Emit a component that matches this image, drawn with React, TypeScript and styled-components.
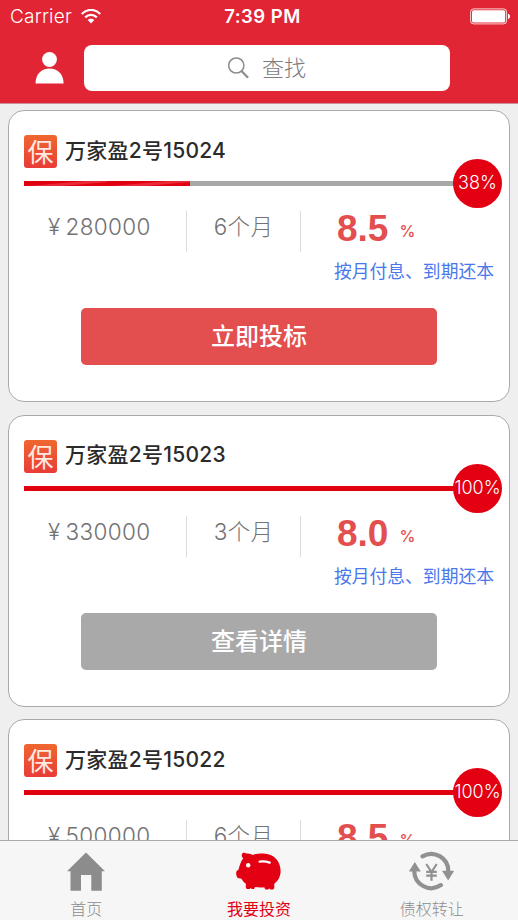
import React from 'react';
import styled, { createGlobalStyle } from 'styled-components';

const GlobalStyle = createGlobalStyle`
  * { box-sizing: border-box; }
  body { margin: 0; background: #efefef; font-family: Inter, "Noto Sans CJK SC", sans-serif; }
`;

const Screen = styled.div`
  width: 518px;
  height: 920px;
  display: flex;
  flex-direction: column;
  overflow: hidden;
  background: #efefef;
`;

const Header = styled.header`
  flex: none;
  height: 104px;
  background: #e22534;
  color: #fff;
  border-bottom: 1px solid #c9929a;
`;

const StatusBar = styled.div`
  height: 33px;
  display: grid;
  grid-template-columns: 1fr auto 1fr;
  align-items: center;
  padding: 0 7px 0 10px;
  font-size: 18px;
  line-height: 33px;
`;

const Carrier = styled.div`
  display: flex;
  align-items: center;
  gap: 9px;
  font-size: 19px;
  font-weight: 300;
  letter-spacing: 0.2px;
`;

const Clock = styled.div`
  font-weight: 600;
  font-size: 18.5px;
  letter-spacing: 0.5px;
  padding-left: 4px;
`;

const BatterySlot = styled.div`
  display: flex;
  justify-content: flex-end;
`;

const SearchRow = styled.div`
  display: flex;
  align-items: center;
  padding: 12px 0 0 35px;
  gap: 20px;
`;

const SearchBox = styled.div`
  width: 366px;
  height: 46px;
  border-radius: 8px;
  background: #fff;
  color: #7c7c81;
  display: flex;
  align-items: center;
  justify-content: center;
  gap: 13px;
  font-size: 22px;
  font-weight: 300;
  line-height: 46px;
  padding-bottom: 1px;
`;

const List = styled.main`
  flex: 1;
  min-height: 0;
  overflow: hidden;
  padding: 6px 8px 0;
  display: flex;
  flex-direction: column;
  gap: 12.5px;
`;

const Card = styled.section`
  flex: none;
  height: 292px;
  border: 1px solid #aaa;
  border-radius: 16px;
  background: #fff;
  padding: 24px 7px 0 15px;
`;

const TitleRow = styled.div`
  display: flex;
  align-items: center;
  gap: 8px;
  height: 33px;
`;

const Badge = styled.span`
  width: 33px;
  height: 33px;
  border-radius: 3px;
  background: linear-gradient(#f0672e, #e93b38);
  color: #ffe9e2;
  font-size: 26px;
  line-height: 33px;
  padding-top: 1px;
  text-align: center;
`;

const Title = styled.h2`
  margin: 0;
  font-size: 21px;
  font-weight: 500;
  line-height: 30px;
  color: #2b2b2b;
  letter-spacing: 0.25px;
  white-space: nowrap;
  padding-bottom: 2px;
`;

const ProgressRow = styled.div`
  display: flex;
  align-items: center;
  height: 49px;
  margin-top: -9px;
`;

const Track = styled.div`
  flex: 1;
  height: 5px;
  margin-right: -8px;
  background: #a8a8a8;
`;

const Fill = styled.div<{ $striped: boolean }>`
  height: 5px;
  background: ${({ $striped }) =>
    $striped
      ? 'linear-gradient(175deg, #e1000f 40%, #e92a39 48%, #e92a39 64%, #e1000f 72%) 0 0 / 83px 5px'
      : '#e1000f'};
`;

const Percent = styled.div`
  flex: none;
  width: 49px;
  height: 49px;
  border-radius: 50%;
  background: #e20012;
  color: #fff;
  font-size: 18px;
  font-weight: 300;
  line-height: 48px;
  display: flex;
  justify-content: center;
`;

const Facts = styled.div`
  display: grid;
  grid-template-columns: 163px 114px 1fr;
  height: 41px;
  margin-top: 3px;
`;

const Fact = styled.div`
  border-right: 1px solid #dcdcdc;
  color: #727272;
  font-size: 22.5px;
  font-weight: 300;
  line-height: 32px;
  text-align: center;
  white-space: nowrap;
  letter-spacing: 0.35px;
`;

const Amount = styled(Fact)`
  text-align: left;
  padding-left: 24px;
  display: flex;
  gap: 5px;
`;

const Rate = styled.div`
  padding-left: 36px;
  display: flex;
  align-items: baseline;
  color: #e34e4f;
  font-size: 37px;
  line-height: 35px;
  font-weight: 700;
  font-family: "Liberation Sans", sans-serif;
`;

const RateUnit = styled.span`
  font: 500 16px/20px Inter, sans-serif;
  margin-left: 11px;
  transform: translateY(-4px);
`;

const Terms = styled.div`
  color: #4a78ec;
  font-size: 17.8px;
  font-weight: 400;
  line-height: 26px;
  text-align: right;
  padding-right: 8px;
  margin-top: 7px;
`;

const Action = styled.button<{ $muted: boolean }>`
  display: block;
  width: 356px;
  height: 57px;
  margin: 23px 0 0 57px;
  padding: 0 0 4px;
  border: 0;
  border-radius: 5px;
  background: ${({ $muted }) => ($muted ? '#a9a9a9' : '#e34e4f')};
  color: #fff;
  font: 500 24px "Noto Sans CJK SC", sans-serif;
`;

const TabBar = styled.nav`
  flex: none;
  height: 80px;
  border-top: 1px solid #aaa;
  background: #f6f6f6;
  display: grid;
  grid-template-columns: repeat(3, 1fr);
`;

const Tab = styled.div<{ $active?: boolean }>`
  display: flex;
  flex-direction: column;
  align-items: center;
  color: ${({ $active }) => ($active ? '#e20012' : '#8c8c8c')};
  font-size: 16px;
  font-weight: ${({ $active }) => ($active ? 400 : 300)};
  line-height: 24px;
  padding-top: 8px;
  gap: 4px;
  svg { display: block; }
`;

const items = [
  { title: '万家盈2号15024', amount: '280000', term: '6个月', rate: '8.5', percent: 38, action: '立即投标' },
  { title: '万家盈2号15023', amount: '330000', term: '3个月', rate: '8.0', percent: 100, action: '查看详情' },
  { title: '万家盈2号15022', amount: '500000', term: '6个月', rate: '8.5', percent: 100, action: '查看详情' },
];

const WifiIcon = () => (
  <svg width="20" height="15" viewBox="0 0 20 15" fill="none" stroke="#fff" strokeWidth="2.3">
    <path d="M.8 5C6-.4 14-.4 19.200 5M4.200 8.400c3.300-3.300 8.300-3.300 11.600 0" />
    <path d="M6.700 11.100c1.900-1.900 4.700-1.900 6.600 0L10 14.400z" fill="#fff" stroke="none" />
  </svg>
);

const BatteryIcon = () => (
  <svg width="41" height="17" viewBox="0 0 41 17">
    <rect x=".6" y=".9" width="36" height="15" rx="3" fill="none" stroke="#fff" strokeWidth="1" strokeOpacity=".8" />
    <rect x="2" y="2.300" width="33.200" height="12.200" rx="1.500" fill="#fff" />
    <path d="M38 5.800c2.700.8 2.700 4.500 0 5.300z" fill="#fff" />
  </svg>
);

const UserIcon = () => (
  <svg width="29" height="32" viewBox="0 0 29 32" fill="#fff">
    <circle cx="14.500" cy="7.500" r="7.400" />
    <path d="M.5 31.500C.5 22 6.500 16.500 14.500 16.500S28.600 22 28.600 31.500z" />
  </svg>
);

const SearchIcon = () => (
  <svg width="21" height="22" viewBox="0 0 21 22" fill="none" stroke="#8c8c90">
    <circle cx="8.300" cy="8.500" r="7.600" strokeWidth="1.500" />
    <path d="m13.500 14 6.600 6.700" strokeWidth="2.200" />
  </svg>
);

const HomeIcon = () => (
  <svg width="38" height="44" viewBox="0 0 38 44" fill="currentColor">
    <path d="M19 3.500 38 22.300h-3.200V41.700H24.300V26H14v15.700H3.500V22.300H0z" />
  </svg>
);

const PigIcon = () => (
  <svg width="45" height="44" viewBox="0 0 45 44">
    <path fill="currentColor" d="M6.500 4.300c1.300-.8 2.700-.4 4 .1 2.200.1 4.500.4 6.500 1.500 3-1.100 6.700-1.400 10.500-1.300C38 4.800 44.600 12.500 44.600 22c0 5.500-2.200 9.500-6.300 12.700V38c0 1.800-.8 2.600-2.400 2.600h-1.700l-.9-1.300-1 1.300h-1.500c-1.500 0-2.400-.7-2.400-2.300-3.200.3-6 .2-9.500-.2-.2 1.500-.7 2-2 2h-1.200l-1-1.200-1 1.200H12c-1.600 0-2.200-.8-2.200-2.300v-3.200c-1.900-1.200-3.200-2.700-4.300-4.900l-3.700-.7C.5 27.500 0 25.500.2 23.700.4 22 1.200 21.200 2.500 20.800c1-3.700 1.700-7.300 4.700-11.500C6 8 4.900 6 6.500 4.300z" />
    <circle cx="12.200" cy="16.300" r="2.200" fill="#fff" />
    <path d="M23.600 12.600c3.800-.5 6.900-.1 10.100 1.100" fill="none" stroke="#fff" strokeWidth="2.300" strokeLinecap="round" />
  </svg>
);

const TransferIcon = () => (
  <svg width="45" height="44" viewBox="0 0 45 44" fill="none" stroke="#919191">
    <path d="M13.500 7.400A17 17 0 0 1 39.300 22M5.300 21.500A17 17 0 0 0 31.900 36.100" strokeWidth="4.200" strokeLinecap="round" />
    <path d="M33 21.800H45.200L39.200 31.500zM-.2 22.500H11.800L5.800 13z" fill="#919191" stroke="none" />
    <path d="m17.300 15 5.200 8 5.200-8M22.500 23v8.700M17.200 22.800h10.600M17.200 26.700h10.600" strokeWidth="2.200" />
  </svg>
);

export default function App() {
  return (
    <>
      <GlobalStyle />
      <Screen>
        <Header>
          <StatusBar>
            <Carrier>Carrier <WifiIcon /></Carrier>
            <Clock>7:39 PM</Clock>
            <BatterySlot><BatteryIcon /></BatterySlot>
          </StatusBar>
          <SearchRow>
            <UserIcon />
            <SearchBox><SearchIcon />查找</SearchBox>
          </SearchRow>
        </Header>
        <List>
          {items.map((item) => (
            <Card key={item.title}>
              <TitleRow>
                <Badge>保</Badge>
                <Title>{item.title}</Title>
              </TitleRow>
              <ProgressRow>
                <Track>
                  <Fill $striped={item.percent < 100} style={{ width: `${item.percent}%` }} />
                </Track>
                <Percent>{item.percent}%</Percent>
              </ProgressRow>
              <Facts>
                <Amount><span>¥</span>{item.amount}</Amount>
                <Fact>{item.term}</Fact>
                <Rate>{item.rate}<RateUnit>%</RateUnit></Rate>
              </Facts>
              <Terms>按月付息、到期还本</Terms>
              <Action $muted={item.percent === 100}>{item.action}</Action>
            </Card>
          ))}
        </List>
        <TabBar>
          <Tab><HomeIcon />首页</Tab>
          <Tab $active><PigIcon />我要投资</Tab>
          <Tab><TransferIcon />债权转让</Tab>
        </TabBar>
      </Screen>
    </>
  );
}
